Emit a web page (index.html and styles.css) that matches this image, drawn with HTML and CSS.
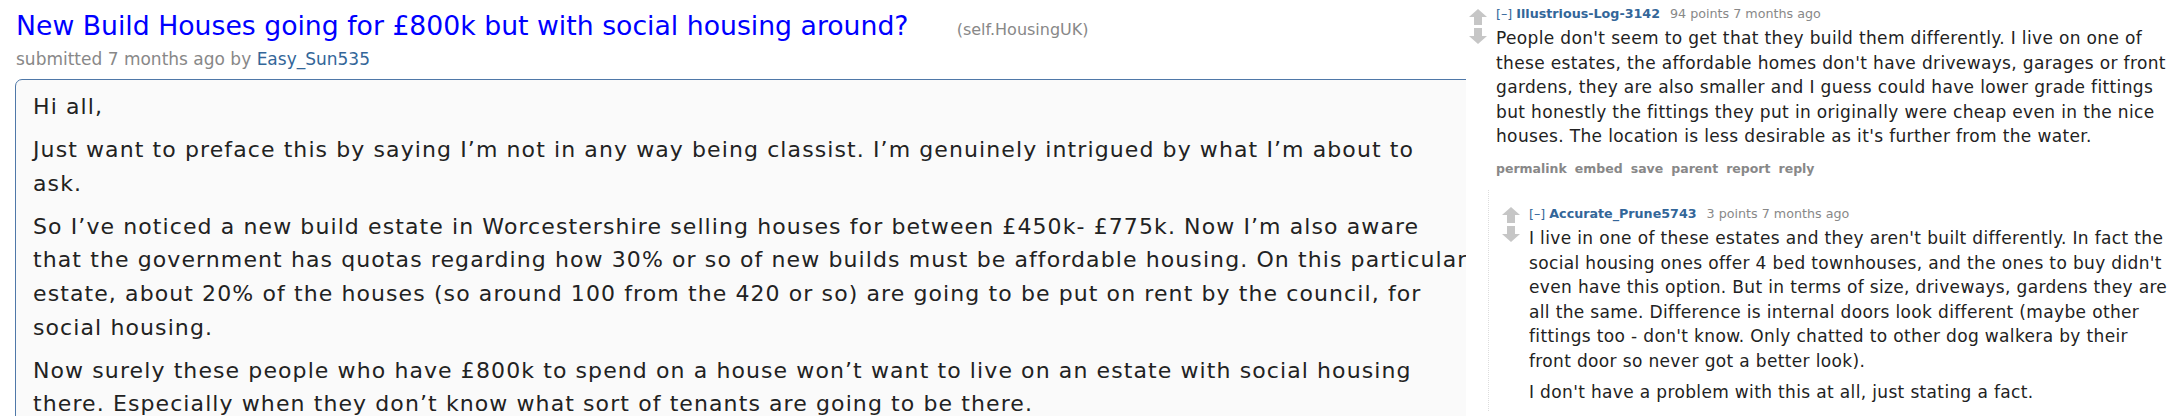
FILE: index.html
```html
<!DOCTYPE html>
<html lang="en">
<head>
    <meta charset="UTF-8">
    <title>New Build Houses going for £800k but with social housing around?</title>
    <link rel="stylesheet" href="styles.css">
</head>
<body>
    <div class="post">
        <div class="post-title">
            <a class="title" href="#">New Build Houses going for £800k but with social housing around?</a>
            <span class="domain">(self.HousingUK)</span>
        </div>
        <div class="tagline">submitted 7 months ago by <a class="author" href="#">Easy_Sun535</a></div>
        <div class="usertext">
            <p>Hi all,</p>
            <p>Just want to preface this by saying I’m not in any way being classist. I’m genuinely intrigued by what I’m about to<br>ask.</p>
            <p>So I’ve noticed a new build estate in Worcestershire selling houses for between £450k- £775k. Now I’m also aware<br>that the government has quotas regarding how 30% or so of new builds must be affordable housing. On this particular<br>estate, about 20% of the houses (so around 100 from the 420 or so) are going to be put on rent by the council, for<br>social housing.</p>
            <p>Now surely these people who have £800k to spend on a house won’t want to live on an estate with social housing<br>there. Especially when they don’t know what sort of tenants are going to be there.</p>
        </div>
    </div>

    <div class="comments">
        <div class="comment">
            <div class="votes">
                <svg class="arrow" viewBox="0 0 18 16"><path d="M9 0 L18 8 H13 V16 H5 V8 H0 Z"/></svg>
                <svg class="arrow" viewBox="0 0 18 16"><path d="M9 16 L18 8 H13 V0 H5 V8 H0 Z"/></svg>
            </div>
            <div class="entry">
                <div class="comment-tagline"><span class="expand">[–]</span> <a class="comment-author" href="#">Illustrious-Log-3142</a> <span class="score">94 points 7 months ago</span></div>
                <div class="comment-body">
                    <p>People don't seem to get that they build them differently. I live on one of<br>these estates, the affordable homes don't have driveways, garages or front<br>gardens, they are also smaller and I guess could have lower grade fittings<br>but honestly the fittings they put in originally were cheap even in the nice<br>houses. The location is less desirable as it's further from the water.</p>
                </div>
                <ul class="buttons">
                    <li>permalink</li>
                    <li>embed</li>
                    <li>save</li>
                    <li>parent</li>
                    <li>report</li>
                    <li>reply</li>
                </ul>
            </div>
        </div>

        <div class="child">
            <div class="comment">
                <div class="votes">
                    <svg class="arrow" viewBox="0 0 18 16"><path d="M9 0 L18 8 H13 V16 H5 V8 H0 Z"/></svg>
                    <svg class="arrow" viewBox="0 0 18 16"><path d="M9 16 L18 8 H13 V0 H5 V8 H0 Z"/></svg>
                </div>
                <div class="entry">
                    <div class="comment-tagline"><span class="expand">[–]</span> <a class="comment-author" href="#">Accurate_Prune5743</a> <span class="score">3 points 7 months ago</span></div>
                    <div class="comment-body">
                        <p>I live in one of these estates and they aren't built differently. In fact the<br>social housing ones offer 4 bed townhouses, and the ones to buy didn't<br>even have this option. But in terms of size, driveways, gardens they are<br>all the same. Difference is internal doors look different (maybe other<br>fittings too - don't know. Only chatted to other dog walkera by their<br>front door so never got a better look).</p>
                        <p>I don't have a problem with this at all, just stating a fact.</p>
                    </div>
                </div>
            </div>
        </div>
    </div>
</body>
</html>
```

FILE: styles.css
```css
body {
    margin: 0;
    display: flex;
    font-family: "DejaVu Sans", Verdana, sans-serif;
    background-color: #ffffff;
    color: #222222;
}
a {
    text-decoration: none;
}

/* post on the left, cut off at its right edge */
.post {
    width: 1466px;
    flex-shrink: 0;
    overflow: hidden;
}
.post-title {
    padding: 9px 0 0 16px;
    line-height: 34px;
    white-space: nowrap;
}
.title {
    font-size: 26.7px;
    color: #0000ff;
}
.domain {
    margin-left: 43px;
    font-size: 16px;
    color: #888888;
}
.tagline {
    margin-top: 1px;
    padding-left: 16px;
    font-size: 17px;
    line-height: 22px;
    color: #888888;
}
.author {
    color: #336699;
}
.usertext {
    width: 1480px;
    margin: 9px 0 0 15px;
    padding: 10px 17px 0;
    height: 400px;
    background-color: #fafafa;
    border: 1px solid #4f78a8;
    border-radius: 7px;
    font-size: 22px;
    line-height: 33.6px;
    letter-spacing: 1.1px;
}
.usertext p {
    margin: 0 0 9.5px;
    white-space: nowrap;
}

/* comment column */
.comments {
    flex: 1;
    min-width: 0;
    overflow: hidden;
    padding: 4px 0 0 3px;
}
.comment {
    display: flex;
}
.votes {
    display: flex;
    flex-direction: column;
    gap: 3px;
    width: 18px;
    flex-shrink: 0;
    padding-top: 5px;
    margin-right: 9px;
}
.arrow {
    width: 18px;
    height: 16px;
    fill: #c6c6c6;
}
.comment-tagline {
    font-size: 12.7px;
    line-height: 20px;
    color: #888888;
}
.expand {
    color: #336699;
}
.comment-author {
    font-weight: bold;
    color: #336699;
    margin-right: 6px;
}
.comment-body {
    margin-top: 2px;
    font-size: 17px;
    line-height: 24.6px;
    letter-spacing: 0.35px;
}
.comment-body p {
    margin: 0 0 6.5px;
    white-space: nowrap;
}
.buttons {
    display: flex;
    gap: 8px;
    list-style: none;
    margin: 10px 0 0;
    padding: 0;
    font-size: 12.5px;
    font-weight: bold;
    line-height: 20px;
    color: #888888;
}
.child {
    margin: 11px 0 0 19px;
    padding: 14px 0 0 13px;
    border-left: 1px dotted #dddddd;
}
.child .votes {
    padding-top: 3px;
    margin-right: 9px;
}
```
